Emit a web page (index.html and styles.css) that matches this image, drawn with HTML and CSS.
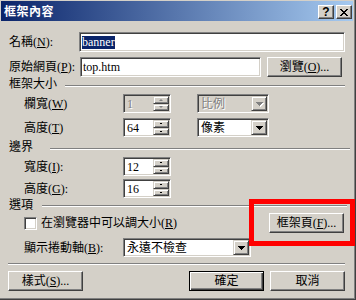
FILE: index.html
```html
<!DOCTYPE html>
<html lang="zh-Hant">
<head>
    <meta charset="UTF-8">
    <title>框架內容</title>
    <link rel="stylesheet" href="styles.css">
</head>
<body>
    <div class="window">
        <div class="titlebar">
            <span class="title">框架內容</span>
            <div class="caption-buttons">
                <span class="cap-btn help">?</span>
                <span class="cap-btn close">
                    <svg width="8" height="7" viewBox="0 0 8 7" shape-rendering="crispEdges"><path d="M0 0h2v1H0zM6 0h2v1H6zM1 1h2v1H1zM5 1h2v1H5zM2 2h4v1H2zM3 3h2v1H3zM2 4h4v1H2zM1 5h2v1H1zM5 5h2v1H5zM0 6h2v1H0zM6 6h2v1H6z"/></svg>
                </span>
            </div>
        </div>

        <div class="dialog">
            <div class="row row-name">
                <span class="label">名稱(<u>N</u>):</span>
                <div class="field name-field"><span class="selected">banner</span></div>
            </div>

            <div class="row row-src">
                <span class="label">原始網頁(<u>P</u>):</span>
                <div class="field src-field">top.htm</div>
                <div class="btn browse">瀏覽(<u>O</u>)...</div>
            </div>

            <div class="group group-size">
                <span class="group-title">框架大小</span>
                <i class="etch"></i>
            </div>

            <div class="row sub-row row-width">
                <span class="sublabel">欄寬(<u>W</u>)</span>
                <div class="spin disabled">
                    <span class="spin-value">1</span>
                    <span class="spin-arrows"><i class="spin-up"></i><i class="spin-down"></i></span>
                </div>
                <div class="select unit-select disabled">
                    <span class="select-value">比例</span>
                    <span class="select-btn"><svg width="7" height="4" viewBox="0 0 7 4" shape-rendering="crispEdges"><path d="M0 0h7v1h-1v1h-1v1h-1v1h-1v-1h-1v-1h-1v-1h-1z"/></svg></span>
                </div>
            </div>

            <div class="row sub-row row-height">
                <span class="sublabel">高度(<u>T</u>)</span>
                <div class="spin">
                    <span class="spin-value">64</span>
                    <span class="spin-arrows"><i class="spin-up"></i><i class="spin-down"></i></span>
                </div>
                <div class="select unit-select">
                    <span class="select-value">像素</span>
                    <span class="select-btn"><svg width="7" height="4" viewBox="0 0 7 4" shape-rendering="crispEdges"><path d="M0 0h7v1h-1v1h-1v1h-1v1h-1v-1h-1v-1h-1v-1h-1z"/></svg></span>
                </div>
            </div>

            <div class="group group-margin">
                <span class="group-title">邊界</span>
                <i class="etch"></i>
            </div>

            <div class="row sub-row row-mwidth">
                <span class="sublabel">寬度(<u>I</u>):</span>
                <div class="spin">
                    <span class="spin-value">12</span>
                    <span class="spin-arrows"><i class="spin-up"></i><i class="spin-down"></i></span>
                </div>
            </div>

            <div class="row sub-row row-mheight">
                <span class="sublabel">高度(<u>G</u>):</span>
                <div class="spin">
                    <span class="spin-value">16</span>
                    <span class="spin-arrows"><i class="spin-up"></i><i class="spin-down"></i></span>
                </div>
            </div>

            <div class="group group-options">
                <span class="group-title">選項</span>
                <i class="etch"></i>
            </div>

            <div class="row row-resize">
                <span class="checkbox"></span>
                <span class="check-label">在瀏覽器中可以調大小(<u>R</u>)</span>
                <div class="btn frame-page">框架頁(<u>F</u>)...</div>
            </div>

            <div class="row sub-row row-scroll">
                <span class="sublabel">顯示捲動軸(<u>B</u>):</span>
                <div class="select scroll-select">
                    <span class="select-value">永遠不檢查</span>
                    <span class="select-btn"><svg width="7" height="4" viewBox="0 0 7 4" shape-rendering="crispEdges"><path d="M0 0h7v1h-1v1h-1v1h-1v1h-1v-1h-1v-1h-1v-1h-1z"/></svg></span>
                </div>
            </div>

            <div class="separator"></div>

            <div class="row row-buttons">
                <div class="btn">樣式(<u>S</u>)...</div>
                <div class="btn btn-default ok">確定</div>
                <div class="btn">取消</div>
            </div>
        </div>

        <!-- highlight drawn over the screenshot -->
        <div class="callout"></div>
    </div>
</body>
</html>
```

FILE: styles.css
```css
* {
    margin: 0;
    padding: 0;
    box-sizing: border-box;
}

body {
    width: 356px;
    height: 300px;
    overflow: hidden;
    font-family: 'Liberation Serif', 'Noto Sans CJK TC', serif;
    font-size: 12px;
    line-height: 14px;
    color: #000;
}

u {
    text-decoration: underline;
    text-underline-offset: 1px;
}

.window {
    position: relative;
    width: 356px;
    height: 300px;
    background: #D4D0C8;
    padding: 1px 0 0 1px;
    border-right: 1px solid #404040;
    border-bottom: 1px solid #404040;
    box-shadow: inset -1px -1px #808080;
}

/* title bar */
.titlebar {
    width: 352px;
    height: 20px;
    display: flex;
    align-items: flex-start;
    padding: 0 1px 0 3px;
    background: linear-gradient(to right, #0A246A, #A6CAF0);
}

.title {
    margin-top: 3px;
    color: #fff;
    font-family: 'Noto Sans CJK TC', sans-serif;
    font-weight: bold;
    font-size: 12px;
    letter-spacing: 0.5px;
}

.caption-buttons {
    margin-left: auto;
    margin-top: 4px;
    display: flex;
    gap: 2px;
}

.cap-btn {
    width: 16px;
    height: 14px;
    display: flex;
    align-items: center;
    justify-content: center;
    background: #D4D0C8;
    border: 1px solid;
    border-color: #fff #404040 #404040 #fff;
    box-shadow: inset -1px -1px #808080;
}

.help {
    font-family: 'Liberation Sans', sans-serif;
    font-weight: bold;
    font-size: 12px;
    line-height: 12px;
}

/* dialog body */
.dialog {
    width: 344px;
    padding-left: 7px;
}

.row {
    display: flex;
    align-items: center;
}

.label {
    width: 72px;
    padding-left: 1px;
}

.sublabel {
    width: 99px;
    margin-left: 16px;
}

.row-name {
    margin-top: 11px;
    height: 20px;
}

.row-src {
    margin-top: 5px;
    height: 20px;
}

.field {
    height: 20px;
    display: flex;
    align-items: center;
    padding: 0 2px;
    background: #fff;
    border: 1px solid;
    border-color: #808080 #fff #fff #808080;
    box-shadow: inset 1px 1px #404040, inset -1px -1px #D4D0C8;
}

.name-field {
    width: 266px;
    flex-shrink: 0;
}

.src-field {
    width: 181px;
}

.selected {
    background: #0A246A;
    color: #fff;
    line-height: 13px;
}

.btn {
    width: 75px;
    height: 20px;
    flex-shrink: 0;
    display: flex;
    align-items: center;
    justify-content: center;
    background: #D4D0C8;
    border: 1px solid;
    border-color: #fff #404040 #404040 #fff;
    box-shadow: inset -1px -1px #808080;
}

.browse {
    margin-left: 6px;
}

.btn-default {
    border-color: #000;
    box-shadow: inset 1px 1px #fff, inset -1px -1px #404040, inset -2px -2px #808080;
}

/* group headers */
.group {
    display: flex;
    height: 14px;
}

.group-title {
    flex-shrink: 0;
    white-space: nowrap;
    padding-left: 1px;
}

.etch {
    flex-shrink: 0;
    height: 2px;
    border-top: 1px solid #808080;
    border-bottom: 1px solid #fff;
}

.group-size .etch {
    margin-top: 8px;
    margin-left: 8px;
    width: 280px;
}

.group-margin {
    margin-top: 3px;
}

.group-margin .etch {
    margin-top: 8px;
    margin-left: 17px;
    width: 300px;
}

.group-options .etch {
    margin-top: 7px;
    margin-left: 9px;
    width: 305px;
}

/* size / margin rows */
.sub-row {
    height: 19px;
}

.row-width {
    margin-top: 3px;
}

.row-height {
    margin-top: 5px;
}

.row-mwidth {
    margin-top: 3px;
}

.row-mheight {
    margin-top: 3px;
}

.spin,
.select {
    height: 19px;
    display: flex;
    padding: 1px;
    background: #fff;
    border: 1px solid;
    border-color: #808080 #fff #fff #808080;
    box-shadow: inset 1px 1px #404040, inset -1px -1px #D4D0C8;
}

.spin {
    width: 48px;
}

.spin-value,
.select-value {
    flex: 1;
    padding-left: 2px;
    display: flex;
    align-items: center;
    white-space: nowrap;
}

.spin-arrows {
    width: 16px;
    display: flex;
    flex-direction: column;
}

.spin-arrows i,
.select-btn {
    flex: 1;
    display: flex;
    align-items: center;
    justify-content: center;
    background: #D4D0C8;
    border: 1px solid;
    border-color: #D4D0C8 #404040 #404040 #D4D0C8;
    box-shadow: inset 1px 1px #fff, inset -1px -1px #808080;
}

.spin-arrows i::after {
    content: '';
    width: 2px;
    height: 1px;
    background: #000;
}

.select-btn {
    flex: none;
    width: 16px;
}

.unit-select {
    width: 72px;
    margin-left: 26px;
}

.scroll-select {
    width: 128px;
}

.disabled {
    background: #D4D0C8;
    color: #808080;
}

.disabled .spin-value,
.disabled .select-value {
    text-shadow: 1px 1px #fff;
}

.disabled .spin-arrows i::after {
    width: 0;
    height: 0;
    background: none;
    border-left: 2px solid transparent;
    border-right: 2px solid transparent;
}

.disabled .spin-up::after {
    border-bottom: 2px solid #808080;
}

.disabled .spin-down::after {
    border-top: 2px solid #808080;
}

.disabled .select-btn svg {
    fill: #808080;
    filter: drop-shadow(1px 1px 0 #fff);
}

/* options */
.row-resize {
    margin-top: 1px;
    height: 20px;
}

.checkbox {
    width: 13px;
    height: 13px;
    margin-left: 16px;
    background: #fff;
    border: 1px solid;
    border-color: #808080 #fff #fff #808080;
    box-shadow: inset 1px 1px #404040, inset -1px -1px #D4D0C8;
}

.check-label {
    margin-left: 4px;
}

.frame-page {
    margin-left: auto;
    margin-right: 1px;
}

.row-scroll {
    margin-top: 5px;
}

.separator {
    margin-top: 6px;
    height: 2px;
    border-top: 1px solid #808080;
    border-bottom: 1px solid #fff;
}

.row-buttons {
    margin-top: 6px;
    gap: 6px;
}

.ok {
    margin-left: auto;
}

.callout {
    position: absolute;
    left: 249px;
    top: 199px;
    width: 106px;
    height: 47px;
    border: 5px solid #FF0000;
}
```
